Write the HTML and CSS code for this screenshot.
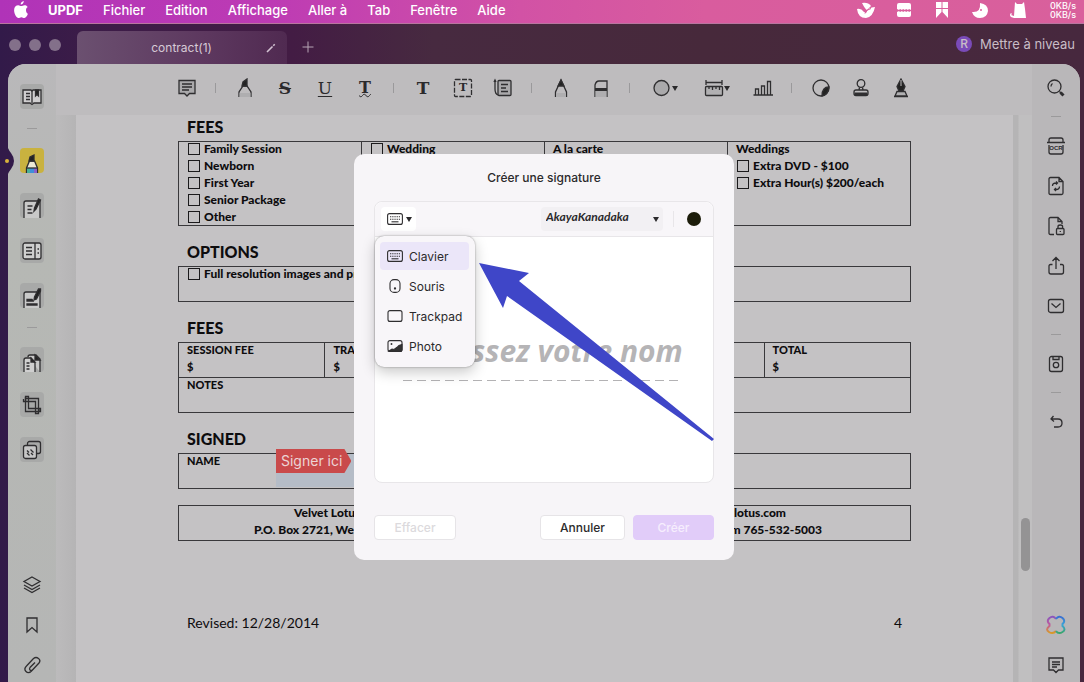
FILE: index.html
```html
<!DOCTYPE html>
<html lang="fr">
<head>
    <meta charset="UTF-8">
    <meta name="viewport" content="width=device-width, initial-scale=1.0">
    <title>UPDF - contract(1)</title>
    <link rel="stylesheet" href="styles.css">
</head>
<body>
    <header class="menubar">
        <svg class="apple" width="14" height="17" viewBox="0 0 14 17" fill="#fff"><path d="M9.8 0c.1 1.900-1.400 3.600-3.100 3.600C6.500 1.900 8.100.2 9.800 0zM12 9c0-1.600.9-2.500 1.700-3-.9-1.300-2.200-1.700-3.200-1.700-1.400 0-2.300.8-3.200.8-.8 0-1.900-.8-3-.8C2 4.300.1 6.100.1 9.300.1 12.900 2.500 17 4.400 17c1.100 0 1.700-.8 3-.8s1.700.8 3 .8c1.500 0 2.900-2.500 3.500-4.200C12.600 12.200 12 10.800 12 9z"/></svg>
        <nav class="menus">
            <a class="brand" href="#">UPDF</a>
            <a href="#">Fichier</a>
            <a href="#">Edition</a>
            <a href="#">Affichage</a>
            <a href="#">Aller à</a>
            <a href="#">Tab</a>
            <a href="#">Fenêtre</a>
            <a href="#">Aide</a>
        </nav>
        <div class="status">
            <svg width="18" height="18" viewBox="0 0 18 18" fill="#fff"><path d="M0 8q4-1 7 3l2 1q2-6 9-6-2 10-9 11Q1 17 0 8z"/><path d="M5 2q6-1 9 3l-4 4q-2-1-5-7z"/><path d="M8 12.500q1-4 6-5" stroke="#d95c9c" fill="none"/></svg>
            <svg width="18" height="18" viewBox="0 0 18 18" fill="#fff"><path d="M2 4q0-2 2-2h10q2 0 2 2v5l-2-1-1 1-2-1-1 1-2-1-1 1-2-1-1 1-2-1zM2 11l2-1 1 1 2-1 1 1 2-1 1 1 2-1 1 1 2-1v4q0 2-2 2H4q-2 0-2-2z"/></svg>
            <svg width="18" height="18" viewBox="0 0 18 18" fill="#fff"><path d="M3 1h5.500v6H3zM9.500 1H15v6H9.500zM3 8h5.500v3L3 17zM9.500 8H15v9l-5.500-6z"/></svg>
            <svg width="18" height="18" viewBox="0 0 18 18" fill="#fff"><path d="M9 2q8 1 8 8-1 7-8 7-6 0-8-6 9 1 8-9z"/><circle cx="10" cy="9" r="1" fill="#d95c9c"/></svg>
            <svg width="18" height="18" viewBox="0 0 18 18" fill="#fff"><path d="M6 1l2 2h5l2-2 1 7 1 9H5l-3-1q-2-2 0-4l1 1-1 1 3 1z"/></svg>
            <div class="netspeed"><span>0KB/s</span><span>0KB/s</span></div>
        </div>
    </header>

    <div class="window">
        <div class="titlebar">
            <div class="lights"><i></i><i></i><i></i></div>
            <div class="tab">
                <span>contract(1)</span>
                <svg class="pencil" width="10" height="10" viewBox="0 0 10 10" stroke="#d2c2d2" stroke-width="1.600"><path d="M1 9l5.500-5.500M7.300 2.700l1.400-1.400"/></svg>
            </div>
            <button class="newtab" aria-label="Nouvel onglet"><svg width="12" height="12" viewBox="0 0 12 12" stroke="#b7a5b5"><path d="M6 .5v11M.5 6h11"/></svg></button>
            <a class="upgrade" href="#"><b>R</b><span>Mettre à niveau</span></a>
        </div>

        <div class="app">
            <aside class="rail rail-left">
                <svg class="notch" width="8" height="36" viewBox="0 0 8 36"><path d="M0 0q0 5 4 10 3 4 3 8t-3 8q-4 5-4 10z" fill="#321a49"/></svg>
                <i class="dot"></i>
                <button class="tile" aria-label="Lecture"><svg width="20" height="20" viewBox="0 0 20 20"><path d="M1 3h8l1 1 1-1h8v13h-7l-2 1.500L8 16H1z" fill="#cfcecf"/><path d="M4 6.500h4M4 9.500h4M4 12.500h4M10 4v12"/><path d="M13.500 3h3v6L15 7.500 13.500 9z" fill="#222"/></svg></button>
                <i class="rule"></i>
                <button class="tile tile-on" aria-label="Commenter"><svg width="20" height="20" viewBox="0 0 20 20"><path d="M4.500 20v-5l3-7h5l3 7v5" fill="#ece8d6"/><path d="M5 15h3v5H5z" fill="#49b09a" stroke="none"/><path d="M8 15h4v5H8z" fill="#3f8fd8" stroke="none"/><path d="M12 15h3v5h-3z" fill="#8a5fc9" stroke="none"/><path d="M4.500 15h11"/><path d="M7 8l1-4 4-2v6z" fill="#222"/></svg></button>
                <button class="tile low" aria-label="Modifier"><svg width="20" height="20" viewBox="0 0 20 20"><path d="M2 20V5q0-2 2-2h14v17" fill="#c9c9c9"/><path d="M5.500 8h5M5.500 11.500h4M5.500 15h5"/><path d="M12 13l.5-3 4-9 2 1-4.500 9z" fill="#222"/></svg></button>
                <button class="tile" aria-label="Organiser"><svg width="20" height="20" viewBox="0 0 20 20"><rect x="1" y="2" width="18" height="16" rx="2" fill="#cfcfcf"/><path d="M13 2v16M4 6.500h6M4 10h6M4 13.500h6M15.500 8h1.500M15.500 12h1.500"/></svg></button>
                <button class="tile low" aria-label="Formulaire"><svg width="20" height="20" viewBox="0 0 20 20"><path d="M2 20V6q0-2 2-2h14v16" fill="#c9c9c9"/><path d="M5 11.500h5l1 1.500H5zM5 16h10v1H5zM12 12l.5-3 4-8h2v2l-4 8z" fill="#222"/></svg></button>
                <i class="rule"></i>
                <button class="tile low" aria-label="Pages"><svg width="20" height="20" viewBox="0 0 20 20"><path d="M6 5q0-2 2-2h6l4 4v13" fill="#c9c9c9"/><path d="M2 20V8q0-2 2-2h5l4 5v9" fill="#cfcfcf"/><path d="M4.500 11h3M4.500 14h3M4.500 17h3"/><path d="M9 6v4h4zM13 3v5h5z" fill="#222"/></svg></button>
                <button class="tile" aria-label="Recadrer"><svg width="20" height="20" viewBox="0 0 20 20"><path d="M3.500 1.500h3v12h12v3h-15zM1.500 4v2.500h12v12h3v-15H3" fill="none"/><path d="M18 13.500v3M3.500 2v4"/></svg></button>
                <button class="tile" aria-label="Filigrane"><svg width="20" height="20" viewBox="0 0 20 20"><rect x="5.500" y="1.500" width="13" height="12" rx="2" fill="none"/><rect x="1.500" y="5.500" width="13" height="13" rx="2" fill="#c6c6c6"/><path d="M5 10.500l2 2M8.500 9.500l3 3M5 13l2.500 2.500M9 13l2 2"/></svg></button>
                <div class="rail-bottom">
                    <button class="plain" aria-label="Calques"><svg width="20" height="20" viewBox="0 0 20 20" fill="none"><path d="M10 2l8 4.500-8 4.500-8-4.500zM2 10l8 4.500 8-4.500M2 13l8 4.500 8-4.500"/></svg></button>
                    <button class="plain" aria-label="Signets"><svg width="20" height="20" viewBox="0 0 20 20" fill="none"><path d="M5 3h10v14l-5-4.500L5 17z"/></svg></button>
                    <button class="plain" aria-label="Pièces jointes"><svg width="20" height="20" viewBox="0 0 20 20" fill="none"><path d="M17 8l-7.500 8q-3 3-5.500.5T4.500 11l7-7.500q2.500-2 5 0t.5 4.500l-6.500 7q-1.500 1-2.500 0t0-2.500l5-5"/></svg></button>
                </div>
            </aside>

            <main class="viewer">
                <div class="toolbar">
                    <button class="tool" aria-label="Note"><svg width="20" height="20" viewBox="0 0 20 20"><path d="M2 2.500h16v13h-5.500L10 18l-2.500-2.500H2z" fill="#aaa9ab"/><path d="M5 6h10M5 9h10M5 12h7"/></svg></button>
                    <i class="sep"></i>
                    <button class="tool" aria-label="Surligner"><svg width="20" height="20" viewBox="0 0 20 20" fill="none"><path d="M4 19v-5l4-6h4l4 6v5"/><path d="M4.500 15h11v4h-11z" fill="#afaeb0" stroke="none"/><path d="M7 8l1-4 4-3v7z" fill="#222"/></svg></button>
                    <button class="tool letter strike">S</button>
                    <button class="tool letter under">U</button>
                    <button class="tool letter wavy">T</button>
                    <i class="sep"></i>
                    <button class="tool letter">T</button>
                    <button class="tool letter letter-small" aria-label="Zone de texte"><svg width="20" height="20" viewBox="0 0 20 20" fill="none"><rect x="1.500" y="1.500" width="17" height="17" rx="1" stroke-dasharray="5 1.500"/></svg><span>T</span></button>
                    <button class="tool" aria-label="Légende"><svg width="20" height="20" viewBox="0 0 20 20"><rect x="5" y="2.500" width="13" height="15" rx="1" fill="#aaa9ab"/><path d="M8 6.500h7M8 10h5M8 13.500h7"/><path d="M5 17Q2 16 2 11V3M1 4l1-2 1 2" fill="none"/></svg></button>
                    <i class="sep"></i>
                    <button class="tool" aria-label="Crayon"><svg width="20" height="20" viewBox="0 0 20 20" fill="none"><path d="M4.500 19v-5L10 2l5.500 12v5"/><path d="M5 15h10v4H5z" fill="#afaeb0" stroke="none"/><path d="M7 8l3-6 3 6z" fill="#222"/></svg></button>
                    <button class="tool" aria-label="Gomme"><svg width="20" height="20" viewBox="0 0 20 20" fill="none"><path d="M4 19V7q1-4 4-4h8v16"/><path d="M4.500 13h11v6h-11z" fill="#afaeb0" stroke="none"/><path class="thick" d="M4 11.500h12"/></svg></button>
                    <i class="sep"></i>
                    <button class="tool tool-drop" aria-label="Formes"><svg width="20" height="20" viewBox="0 0 20 20"><circle cx="9.500" cy="10" r="7.500" fill="#aaa9ab"/></svg><i class="caret"></i></button>
                    <button class="tool tool-drop" aria-label="Mesure"><svg width="20" height="20" viewBox="0 0 20 20"><path d="M1.500 4.500h17M2 2v5M18 2v5"/><rect x="1.500" y="8.500" width="17" height="9" rx="1" fill="#b1b0b2"/><path d="M5 9v2M8.500 9v3M12 9v2M15.500 9v3"/></svg><i class="caret"></i></button>
                    <button class="tool" aria-label="Graphique"><svg width="20" height="20" viewBox="0 0 20 20" fill="none"><path d="M.5 17h19.500M2.500 17v-6h3v6M8.500 17V8h3v9M14.500 17V3.500h3V17"/></svg></button>
                    <i class="sep"></i>
                    <button class="tool" aria-label="Autocollant"><svg width="20" height="20" viewBox="0 0 20 20" fill="none"><circle cx="10" cy="10" r="8"/><path d="M18 9q-7 0-7 9 6-1 7-9z" fill="#222"/></svg></button>
                    <button class="tool" aria-label="Tampon"><svg width="20" height="20" viewBox="0 0 20 20" fill="none"><circle cx="10" cy="5.500" r="3.800"/><path d="M8.500 9.500L8 12M11.500 9.500L12 12"/><rect x="3" y="12" width="14" height="5.500" rx="2"/><path class="thick" d="M3.500 16h13"/></svg></button>
                    <button class="tool" aria-label="Signature"><svg width="20" height="20" viewBox="0 0 20 20"><path d="M10 1l4 7.500L12 13H8L6 8.500z" fill="#222"/><path class="slit" d="M10 2v6"/><path d="M6 13.500h8l2 4.500H4zM3 18.500h14" fill="#b1b0b2"/></svg></button>
                </div>

                <div class="scroller">
                    <article class="page">
                        <h2>FEES</h2>
                        <table class="box prose">
                            <tr>
                                <td>
                                    <label><input type="checkbox">Family Session</label>
                                    <label><input type="checkbox">Newborn</label>
                                    <label><input type="checkbox">First Year</label>
                                    <label><input type="checkbox">Senior Package</label>
                                    <label><input type="checkbox">Other</label>
                                </td>
                                <td><label><input type="checkbox">Wedding</label></td>
                                <td>A la carte</td>
                                <td>
                                    Weddings
                                    <label><input type="checkbox">Extra DVD - $100</label>
                                    <label><input type="checkbox">Extra Hour(s) $200/each</label>
                                </td>
                            </tr>
                        </table>
                        <h2>OPTIONS</h2>
                        <table class="box prose">
                            <tr><td><label><input type="checkbox">Full resolution images and print release</label></td></tr>
                        </table>
                        <h2>FEES</h2>
                        <table class="box">
                            <tr>
                                <td>SESSION FEE<br>$</td>
                                <td>TRAVEL FEE<br>$</td>
                                <td>PRINTS<br>$</td>
                                <td>TAX<br>$</td>
                                <td>TOTAL<br>$</td>
                            </tr>
                            <tr><td colspan="5">NOTES</td></tr>
                        </table>
                        <h2>SIGNED</h2>
                        <table class="box">
                            <tr><td class="sign-cell">NAME<div class="sign-field"><a class="sign-tag" href="#">Signer ici</a></div></td></tr>
                        </table>
                        <div class="address prose">
                            <p><span>Velvet Lotus</span><span>velvetlotus.com</span></p>
                            <p class="wide"><span>P.O. Box 2721, West</span><span>com 765-532-5003</span></p>
                        </div>
                        <footer class="page-foot"><span>Revised: 12/28/2014</span><span>4</span></footer>
                    </article>
                    <div class="thumb"></div>
                </div>
            </main>

            <aside class="rail rail-right">
                <button class="plain" aria-label="Rechercher"><svg width="20" height="20" viewBox="0 0 20 20" fill="none"><circle cx="8.500" cy="8.500" r="6.500"/><path d="M5 8.500q0-2 1.500-3M13.500 13.500l1.500 1.500"/><path class="thick" d="M14.500 14.500l3 3"/></svg></button>
                <i class="rule"></i>
                <button class="plain ocr"><svg width="20" height="20" viewBox="0 0 20 20" fill="none"><path d="M3 6V4q0-2 2-2h10q2 0 2 2v2M1 6.500h18M3 9v7q0 2 2 2h10q2 0 2-2V9"/></svg><span>OCR</span></button>
                <button class="plain" aria-label="Convertir"><svg width="20" height="20" viewBox="0 0 20 20" fill="none"><path d="M3 3q0-1.500 1.500-1.500H13l4 4V17q0 1.500-1.500 1.500h-11Q3 18.500 3 17zM13 1.500v4h4M6.500 10q0-3 3.500-3l1.500.5M10 5.500L11.500 7 10 8.500M13.500 10.500q0 3-3.500 3l-1.500-.5M10 12l-1.500 1.500L10 15"/></svg></button>
                <button class="plain" aria-label="Protéger"><svg width="20" height="20" viewBox="0 0 20 20" fill="none"><path d="M8 18.500H4.500Q3 18.500 3 17V3q0-1.500 1.500-1.500H12l4 4V8M12 1.500v4h4"/><rect x="10.500" y="12.500" width="7.500" height="6" rx="1"/><path d="M12 12v-1.500q0-1.500 2.300-1.500t2.300 1.500V12M14.300 15v1"/></svg></button>
                <button class="plain" aria-label="Partager"><svg width="20" height="20" viewBox="0 0 20 20" fill="none"><path d="M6.500 8.500h-2Q3 8.500 3 10v6q0 2 2 2h10.500q2 0 2-2v-6q0-1.500-1.500-1.500h-2M10 13V2M6.500 5L10 1.500 13.500 5"/></svg></button>
                <button class="plain" aria-label="E-mail"><svg width="20" height="20" viewBox="0 0 20 20" fill="none"><rect x="2.500" y="3.500" width="15" height="13" rx="2"/><path d="M5.500 7.500l4.500 4 4.500-4"/></svg></button>
                <i class="rule"></i>
                <button class="plain" aria-label="Enregistrer"><svg width="20" height="20" viewBox="0 0 20 20" fill="none"><rect x="3.500" y="2.500" width="13" height="15" rx="2"/><path d="M7 3v2.500h6V3"/><circle cx="10" cy="11" r="2.700"/></svg></button>
                <i class="rule"></i>
                <button class="plain" aria-label="Annuler l'action"><svg width="20" height="20" viewBox="0 0 20 20" fill="none"><path d="M7.500 4L5 7l3 2.500M5 7h7q4 0 4 4t-4 4H8"/></svg></button>
                <div class="rail-bottom">
                    <button class="plain" aria-label="UPDF AI"><svg width="20" height="20" viewBox="0 0 20 20" fill="none"><defs><linearGradient id="ai" x1="0" y1="0" x2="0" y2="1"><stop offset="0" stop-color="#8a55bd"/><stop offset=".5" stop-color="#c05b9c"/><stop offset="1" stop-color="#d99a25"/></linearGradient><linearGradient id="ai2" x1="0" y1="0" x2="0" y2="1"><stop offset="0" stop-color="#3a6fd0"/><stop offset=".5" stop-color="#3aa4d8"/><stop offset="1" stop-color="#3aa66c"/></linearGradient></defs><path class="ai-l" d="M10 4Q7 0 3.500 3T3.500 9v2Q-1 14.500 3 17t7-1"/><path class="ai-r" d="M10 4q3-4 6.500-1t0 6v2q4 3.500 0 6t-6.500-1"/></svg></button>
                    <button class="plain" aria-label="Commentaires"><svg width="20" height="20" viewBox="0 0 20 20" fill="none"><path d="M3 3h14v12h-4.500L10 17.500 7.500 15H3zM6 7h8M6 9.500h8M6 12h5"/></svg></button>
                </div>
            </aside>

            <div class="overlay">
                <section class="modal" role="dialog" aria-labelledby="modal-title">
                    <h1 id="modal-title">Créer une signature</h1>
                    <div class="pad">
                        <div class="pad-bar">
                            <button class="mode" aria-label="Mode de saisie">
                                <svg width="16" height="12" viewBox="0 0 16 12" fill="none"><rect x=".6" y=".6" width="14.800" height="10.800" rx="2"/><path d="M3 3.800h10M3 6.200h10" stroke-dasharray="1.300 .9"/><path d="M4.500 8.800h7"/></svg>
                                <i class="caret"></i>
                            </button>
                            <div class="font-pick">
                                <select aria-label="Police"><option>AkayaKanadaka</option></select>
                                <i class="caret"></i>
                            </div>
                            <i class="pad-sep"></i>
                            <button class="ink" aria-label="Couleur"></button>
                        </div>
                        <div class="pad-body">
                            <input class="sign-input" type="text" placeholder="Saisissez votre nom" aria-label="Votre nom">
                            <svg class="baseline" height="1" stroke="#b3b2b4"><path d="M0 .5h278" stroke-dasharray="9 5"/></svg>
                        </div>
                        <div class="mode-menu">
                            <button class="selected"><svg width="16" height="14" viewBox="0 0 16 14" fill="none"><rect x=".6" y="1.600" width="14.800" height="10.800" rx="2"/><path d="M3 4.800h10M3 7.200h10" stroke-dasharray="1.300 .9"/><path d="M4.500 9.800h7"/></svg>Clavier</button>
                            <button><svg width="16" height="14" viewBox="0 0 16 14" fill="none"><rect x="3" y=".6" width="10" height="12.800" rx="4"/><circle cx="8" cy="9.500" r=".6" fill="#333"/></svg>Souris</button>
                            <button><svg width="16" height="14" viewBox="0 0 16 14" fill="none"><rect x="1" y="1.600" width="14" height="10.800" rx="2"/></svg>Trackpad</button>
                            <button><svg width="16" height="14" viewBox="0 0 16 14" fill="none"><rect x="1" y="1.600" width="14" height="10.800" rx="2"/><path d="M2 12l3-2 2 .5L10.500 8 12 6.500l3-1V11l-1 1.400z" fill="#333"/><circle cx="4.500" cy="5" r=".4" fill="#333"/></svg>Photo</button>
                        </div>
                        <svg class="arrow" width="236" height="180" viewBox="0 0 236 180" fill="#3f46c8"><path d="M0 0l50 10-10 8L235 176l-2 2L28 33l-4 12z"/></svg>
                    </div>
                    <div class="actions">
                        <button class="btn btn-clear" disabled>Effacer</button>
                        <button class="btn">Annuler</button>
                        <button class="btn btn-create" disabled>Créer</button>
                    </div>
                </section>
            </div>
        </div>
    </div>
</body>
</html>
```
FILE: styles.css
```css
* {
    box-sizing: border-box;
}
body {
    margin: 0;
    height: 100vh;
    display: flex;
    flex-direction: column;
    overflow: hidden;
    font-family: Inter, "Liberation Sans", sans-serif;
    font-size: 12px;
    color: #2b2a2c;
}
button {
    border: none;
    padding: 0;
    background: none;
    font: inherit;
    color: inherit;
}
a {
    color: inherit;
    text-decoration: none;
}
svg {
    display: block;
    flex: none;
}

/* menu bar */
.menubar {
    flex: none;
    height: 24px;
    display: flex;
    padding: 0 8px 4px 14px;
    align-items: center;
    color: #fff;
    font-size: 13px;
    font-weight: 500;
    border-bottom: 1px solid #b9759f;
    background: linear-gradient(90deg, #b033b8 0%, #bd3bb4 25%, #d252a5 48%, #d95c9e 65%, #d9609c 100%);
}
.menus {
    display: flex;
    gap: 20px;
    margin-left: 20px;
}
.brand {
    font-weight: 700;
}
.status {
    margin-left: auto;
    display: flex;
    align-items: center;
    gap: 20px;
}
.netspeed {
    display: flex;
    flex-direction: column;
    margin-left: 3px;
    font-size: 9px;
    line-height: 9px;
}

/* window chrome */
.window {
    flex: 1;
    min-height: 0;
    display: flex;
    flex-direction: column;
    padding: 0 4px 0 8px;
    background: linear-gradient(90deg, #321a49 0%, #3c1c48 8%, #431c44 27%, #472a40 40%, #47293b 65%, #47283e 100%);
}
.titlebar {
    flex: none;
    height: 40px;
    display: flex;
    align-items: center;
}
.lights {
    display: flex;
    gap: 8px;
    padding: 2px 16px 0 1px;
}
.lights i {
    width: 12px;
    height: 12px;
    border-radius: 50%;
    background: #83708a;
}
.tab {
    align-self: flex-end;
    width: 210px;
    height: 33px;
    display: flex;
    align-items: center;
    justify-content: flex-end;
    gap: 54px;
    padding-right: 11px;
    border-radius: 6px 6px 0 0;
    color: #d6cad6;
    background: linear-gradient(90deg, #6b5070, #5d385f 60%, #502a51);
}
.newtab {
    margin: 6px 0 0 15px;
}
.upgrade {
    margin-left: auto;
    padding-right: 5px;
    display: flex;
    align-items: center;
    gap: 8px;
    color: #c8bdc6;
    font-size: 13px;
}
.upgrade b {
    width: 16px;
    height: 16px;
    border-radius: 50%;
    background: #7a4bb8;
    text-align: center;
    font-size: 12px;
    line-height: 16px;
    font-weight: 500;
}
.app {
    flex: 1;
    min-height: 0;
    display: flex;
    position: relative;
    border-radius: 18px 18px 0 0;
    background: #bebcbe;
}
.app button svg {
    stroke: #2f2e30;
    stroke-width: 1.3;
}
.thick {
    stroke-width: 3;
}
.slit {
    stroke: #bebcbe;
    stroke-width: 1;
}

/* side rails */
.rail {
    flex: none;
    width: 48px;
    display: flex;
    flex-direction: column;
    align-items: center;
    position: relative;
}
.rail-left {
    gap: 20px;
    padding: 20px 0 5px;
    border-radius: 18px 0 0 0;
    background: linear-gradient(#b9b8ba, #b6b8b4 30%, #b5b6b5);
}
.rail-right {
    gap: 16px;
    padding: 12px 0 5px;
    border-radius: 0 18px 0 0;
    background: #b9b7b9;
}
.rule {
    flex: none;
    width: 10px;
    height: 1px;
    background: #9b9a9b;
}
.rail-left .rule {
    margin: -1px 0;
}
.rail-right .rule {
    margin-bottom: 1px;
}
.rail-bottom {
    margin-top: auto;
    display: flex;
    flex-direction: column;
    gap: 16px;
}
.tile,
.plain {
    flex: none;
    width: 24px;
    height: 24px;
    display: flex;
    align-items: center;
    justify-content: center;
    border-radius: 4px;
}
.tile {
    height: 25px;
    background: #a8a9a8;
}
.tile.low,
.tile-on {
    align-items: flex-end;
}
.tile-on {
    background: #c9b23f;
}
.ocr {
    position: relative;
}
.ocr span {
    position: absolute;
    top: 9px;
    font: 700 6px/10px "Liberation Sans", sans-serif;
}
.rail .ai-l {
    stroke: url(#ai);
    stroke-width: 2;
}
.rail .ai-r {
    stroke: url(#ai2);
    stroke-width: 2;
}
.notch {
    position: absolute;
    left: -1px;
    top: 79px;
}
.dot {
    position: absolute;
    left: -3px;
    top: 95px;
    width: 4px;
    height: 4px;
    border-radius: 50%;
    background: #d8b23c;
}

/* toolbar */
.viewer {
    flex: 1;
    min-width: 0;
    display: flex;
    flex-direction: column;
}
.toolbar {
    flex: none;
    height: 51px;
    display: flex;
    align-items: center;
    justify-content: center;
    gap: 16px;
    padding-bottom: 3px;
}
.tool {
    width: 24px;
    height: 24px;
    display: flex;
    align-items: center;
    justify-content: center;
    position: relative;
}
.tool-drop {
    width: 36px;
}
.sep {
    width: 1px;
    height: 10px;
    margin-right: 1px;
    background: #9a999b;
}
.caret {
    border: 3px solid transparent;
    border-top: 5px solid #2b2a2c;
    border-bottom: none;
}
.letter {
    font: 700 17px/24px "DejaVu Serif", serif;
}
.strike {
    text-decoration: line-through 1px;
}
.under {
    font-weight: 400;
    text-decoration: underline 1px;
    text-underline-offset: 2px;
}
.wavy {
    font-size: 16px;
    text-decoration: underline wavy 1px;
    text-underline-offset: 0;
}
.letter-small span {
    position: absolute;
    font-size: 11px;
}

/* document */
.scroller {
    flex: 1;
    min-height: 0;
    position: relative;
    overflow: hidden;
    padding: 0 19px 0 20px;
    background: linear-gradient(90deg, #bcbbbc, #b5b4b5 20px, #b5b4b5 calc(100% - 14px), #c0bfc0 calc(100% - 13px));
}
.page {
    height: 100%;
    padding: 1px 102px 0;
    overflow: hidden;
    background: #c4c2c4;
    color: #0d0c0e;
    font: 900 11px/17px Lato, sans-serif;
}
.page h2 {
    margin: 16px 0 4px 9px;
    font-size: 16px;
    line-height: 20px;
    font-weight: 900;
}
.page h2:first-child {
    margin-top: 1px;
}
.box {
    width: 100%;
    table-layout: fixed;
    border-collapse: collapse;
    font-size: 11px;
}
.prose {
    font-size: 12px;
}
.box td {
    height: 35px;
    padding: 0 8px;
    border: 1px solid #39383b;
    vertical-align: top;
}
/* pulls the first line up against the top border */
.box td::before,
.address::before {
    content: "";
    display: block;
    margin-top: -2px;
}
.box label {
    display: flex;
    align-items: center;
    gap: 4px;
    white-space: nowrap;
}
.box input {
    appearance: none;
    flex: none;
    width: 12px;
    height: 12px;
    margin: 0 0 0 1px;
    border: 1px solid #1b1a1c;
}
.sign-cell {
    position: relative;
}
.sign-field {
    position: absolute;
    left: 97px;
    top: 0;
    width: 120px;
    height: 33px;
    background: #b5bcc7;
}
.sign-tag {
    position: absolute;
    left: 0;
    top: -5px;
    padding: 0 9px 0 5px;
    color: #ecd5d5;
    background: #c94a4b;
    font: 400 14px/24px Inter, sans-serif;
    white-space: nowrap;
    clip-path: polygon(0 0, calc(100% - 7px) 0, 100% 50%, calc(100% - 7px) 100%, 0 100%);
}
.address {
    height: 36px;
    margin-top: 16px;
    border: 1px solid #39383b;
}
.address p {
    display: flex;
    justify-content: space-between;
    margin: 0;
    padding: 0 124px 0 115px;
    white-space: nowrap;
}
.address .wide {
    padding: 0 88px 0 75px;
}
.page-foot {
    display: flex;
    justify-content: space-between;
    margin: 72px 9px 0;
    font-size: 14px;
    line-height: 20px;
    font-weight: 400;
}
.thumb {
    position: absolute;
    right: 2px;
    top: 71%;
    width: 9px;
    height: 53px;
    border-radius: 5px;
    background: #949394;
}

/* signature dialog */
.overlay {
    position: absolute;
    inset: 0;
    display: flex;
    justify-content: center;
    align-items: flex-start;
    padding-top: 90px;
}
.modal {
    width: 380px;
    padding: 14px 20px 20px;
    border-radius: 10px;
    background: #f7f5f8;
}
.modal h1 {
    margin: 0 0 13px;
    font-size: 12px;
    line-height: 20px;
    font-weight: 500;
    text-align: center;
}
.pad {
    position: relative;
    border: 1px solid #e8e6e9;
    border-radius: 8px;
    background: #fff;
}
.pad-bar {
    height: 35px;
    display: flex;
    align-items: center;
    padding: 0 12px 0 6px;
    border-bottom: 1px solid #e8e6e9;
    border-radius: 8px 8px 0 0;
    background: #f8f6f9;
}
.mode {
    height: 24px;
    display: flex;
    align-items: center;
    gap: 3px;
    padding: 0 4px 0 6px;
    border-radius: 4px;
    background: #fff;
}
.pad .mode svg,
.pad .mode-menu svg {
    stroke-width: 1.1;
}
.font-pick {
    margin-left: auto;
    height: 24px;
    display: flex;
    align-items: center;
    padding-right: 4px;
    border-radius: 4px;
    background: #f2f0f3;
}
.font-pick select {
    appearance: none;
    width: 112px;
    padding: 0 0 5px 5px;
    border: none;
    background: none;
    color: #2b2a2c;
    font: italic 700 12px/16px Lato, sans-serif;
}
.pad-sep {
    width: 1px;
    height: 16px;
    margin: 0 13px 0 10px;
    background: #e8e6e9;
}
.ink {
    width: 14px;
    height: 14px;
    border-radius: 50%;
    background: #1c1c0a;
}
.pad-body {
    display: flex;
    flex-direction: column;
    padding: 88px 18px 101px;
}
.sign-input {
    width: 100%;
    height: 55px;
    padding: 0 0 5px;
    border: none;
    background: none;
    text-align: center;
    font: italic 700 30px/50px "Open Sans", sans-serif;
}
.sign-input::placeholder {
    color: #b5b4b6;
}
.baseline {
    width: 278px;
    margin: 0 10px;
}
.mode-menu {
    position: absolute;
    left: 0;
    top: 34px;
    width: 100px;
    display: flex;
    flex-direction: column;
    gap: 2px;
    padding: 6px 6px 7px 5px;
    border-radius: 9px;
    background: #f8f6f9;
    box-shadow: 0 0 2px rgba(0,0,0,0.4), 0 5px 14px rgba(0,0,0,0.22);
}
.mode-menu button {
    height: 28px;
    display: flex;
    align-items: center;
    gap: 6px;
    padding-left: 7px;
    border-radius: 4px;
}
.mode-menu .selected {
    background: #ebe6f9;
}
.arrow {
    position: absolute;
    left: 104px;
    top: 61px;
}
.actions {
    display: flex;
    gap: 8px;
    margin-top: 32px;
}
.btn {
    width: 85px;
    height: 25px;
    border: 1px solid #e6e4e7;
    border-radius: 4px;
    background: #fff;
    font-weight: 500;
}
.btn-clear {
    margin-right: auto;
    width: 82px;
    color: #dcdadd;
}
.btn-create {
    width: 81px;
    border-color: #e1ccf9;
    background: #e1ccf9;
    color: #f6eefd;
}
```
